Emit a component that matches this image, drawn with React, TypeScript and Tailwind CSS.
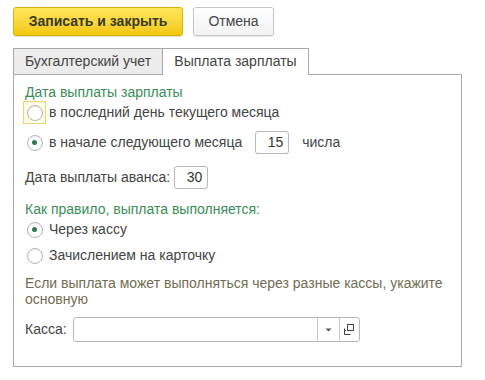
import React from 'react';

const Radio = ({ checked, focused }: { checked?: boolean; focused?: boolean }) => (
  <div
    className={`w-[23px] h-[23px] flex items-center justify-center ${
      focused ? 'border border-[#e8d770] bg-[#fffbe6]' : 'border border-transparent'
    }`}
  >
    <div className="w-[16px] h-[16px] rounded-full border border-[#b4b4b4] bg-white flex items-center justify-center shadow-[inset_0_1px_2px_rgba(0,0,0,0.08)]">
      {checked && <div className="w-[5px] h-[5px] rounded-full bg-[#2f7a52]" />}
    </div>
  </div>
);

const NumBox = ({ value }: { value: string }) => (
  <div className="w-[34px] h-[23px] border border-[#b8b8b8] rounded-[3px] bg-white flex items-center justify-end pr-[5px] text-[#333]">
    {value}
  </div>
);

const App = () => {
  return (
    <div
      className="w-[485px] h-[380px] bg-white pl-[13px] pt-[7px] text-[14px] text-[#444]"
      style={{ fontFamily: '"Liberation Sans", Arial, sans-serif' }}
    >
      <div className="flex gap-[10px]">
        <button className="w-[170px] h-[29px] rounded-[3px] border border-[#d7b400] bg-gradient-to-b from-[#ffe65a] to-[#f3c700] font-bold text-[#3a3a2a] text-[14px] shadow-[0_1px_1px_rgba(0,0,0,0.15)]">
          Записать и закрыть
        </button>
        <button className="w-[81px] h-[29px] rounded-[3px] border border-[#c6c6c6] bg-gradient-to-b from-white to-[#f2f2f2] text-[#444] text-[14px] shadow-[0_1px_1px_rgba(0,0,0,0.1)]">
          Отмена
        </button>
      </div>

      <div className="flex mt-[11px] h-[27px] items-end">
        <div className="w-[150px] h-[26px] border border-[#a9a9a9] border-b-0 bg-[#ececec] flex items-center justify-center">
          Бухгалтерский учет
        </div>
        <div className="w-[146px] h-[27px] border border-[#a9a9a9] border-l-0 border-b-0 bg-white flex items-center justify-center relative z-10 -mb-px pb-px">
          Выплата зарплаты
        </div>
      </div>

      <div className="w-[449px] h-[293px] border border-[#a9a9a9] pl-[11px] pt-[9px]">
        <div className="text-[#3a8d58] leading-[16px]">Дата выплаты зарплаты</div>

        <div className="flex items-center h-[23px] mt-[1px] -ml-[2px] gap-[3px]">
          <Radio focused />
          <span>в последний день текущего месяца</span>
        </div>

        <div className="flex items-center h-[23px] mt-[7px] -ml-[2px] gap-[3px]">
          <Radio checked />
          <span>в начале следующего месяца</span>
          <div className="ml-[10px]">
            <NumBox value="15" />
          </div>
          <span className="ml-[10px]">числа</span>
        </div>

        <div className="flex items-center h-[23px] mt-[12px] gap-[4px]">
          <span>Дата выплаты аванса:</span>
          <NumBox value="30" />
        </div>

        <div className="text-[#3a8d58] leading-[16px] mt-[12px]">Как правило, выплата выполняется:</div>

        <div className="flex items-center h-[23px] mt-[1px] -ml-[2px] gap-[3px]">
          <Radio checked />
          <span>Через кассу</span>
        </div>

        <div className="flex items-center h-[23px] mt-[3px] -ml-[2px] gap-[3px]">
          <Radio />
          <span>Зачислением на карточку</span>
        </div>

        <div className="text-[#716c52] leading-[16px] mt-[8px] pr-[10px]">
          Если выплата может выполняться через разные кассы, укажите основную
        </div>

        <div className="flex items-center mt-[10px] gap-[6px]">
          <span>Касса:</span>
          <div className="w-[287px] h-[25px] border border-[#b8b8b8] rounded-[3px] bg-white flex">
            <div className="flex-1" />
            <div className="w-[22px] border-l border-[#c8c8c8] flex items-center justify-center">
              <svg width="7" height="4" viewBox="0 0 7 4">
                <path d="M0.5 0.5 L6.5 0.5 L3.5 3.5 Z" fill="#555" />
              </svg>
            </div>
            <div className="w-[20px] border-l border-[#c8c8c8] flex items-center justify-center">
              <svg width="11" height="11" viewBox="0 0 11 11" fill="none" stroke="#444" strokeWidth="1">
                <rect x="3.5" y="0.5" width="6" height="6" />
                <path d="M0.5 4.5 V10.5 H6.5" />
                <path d="M0.5 6.5 H2" />
              </svg>
            </div>
          </div>
        </div>
      </div>
    </div>
  );
};

export default App;
